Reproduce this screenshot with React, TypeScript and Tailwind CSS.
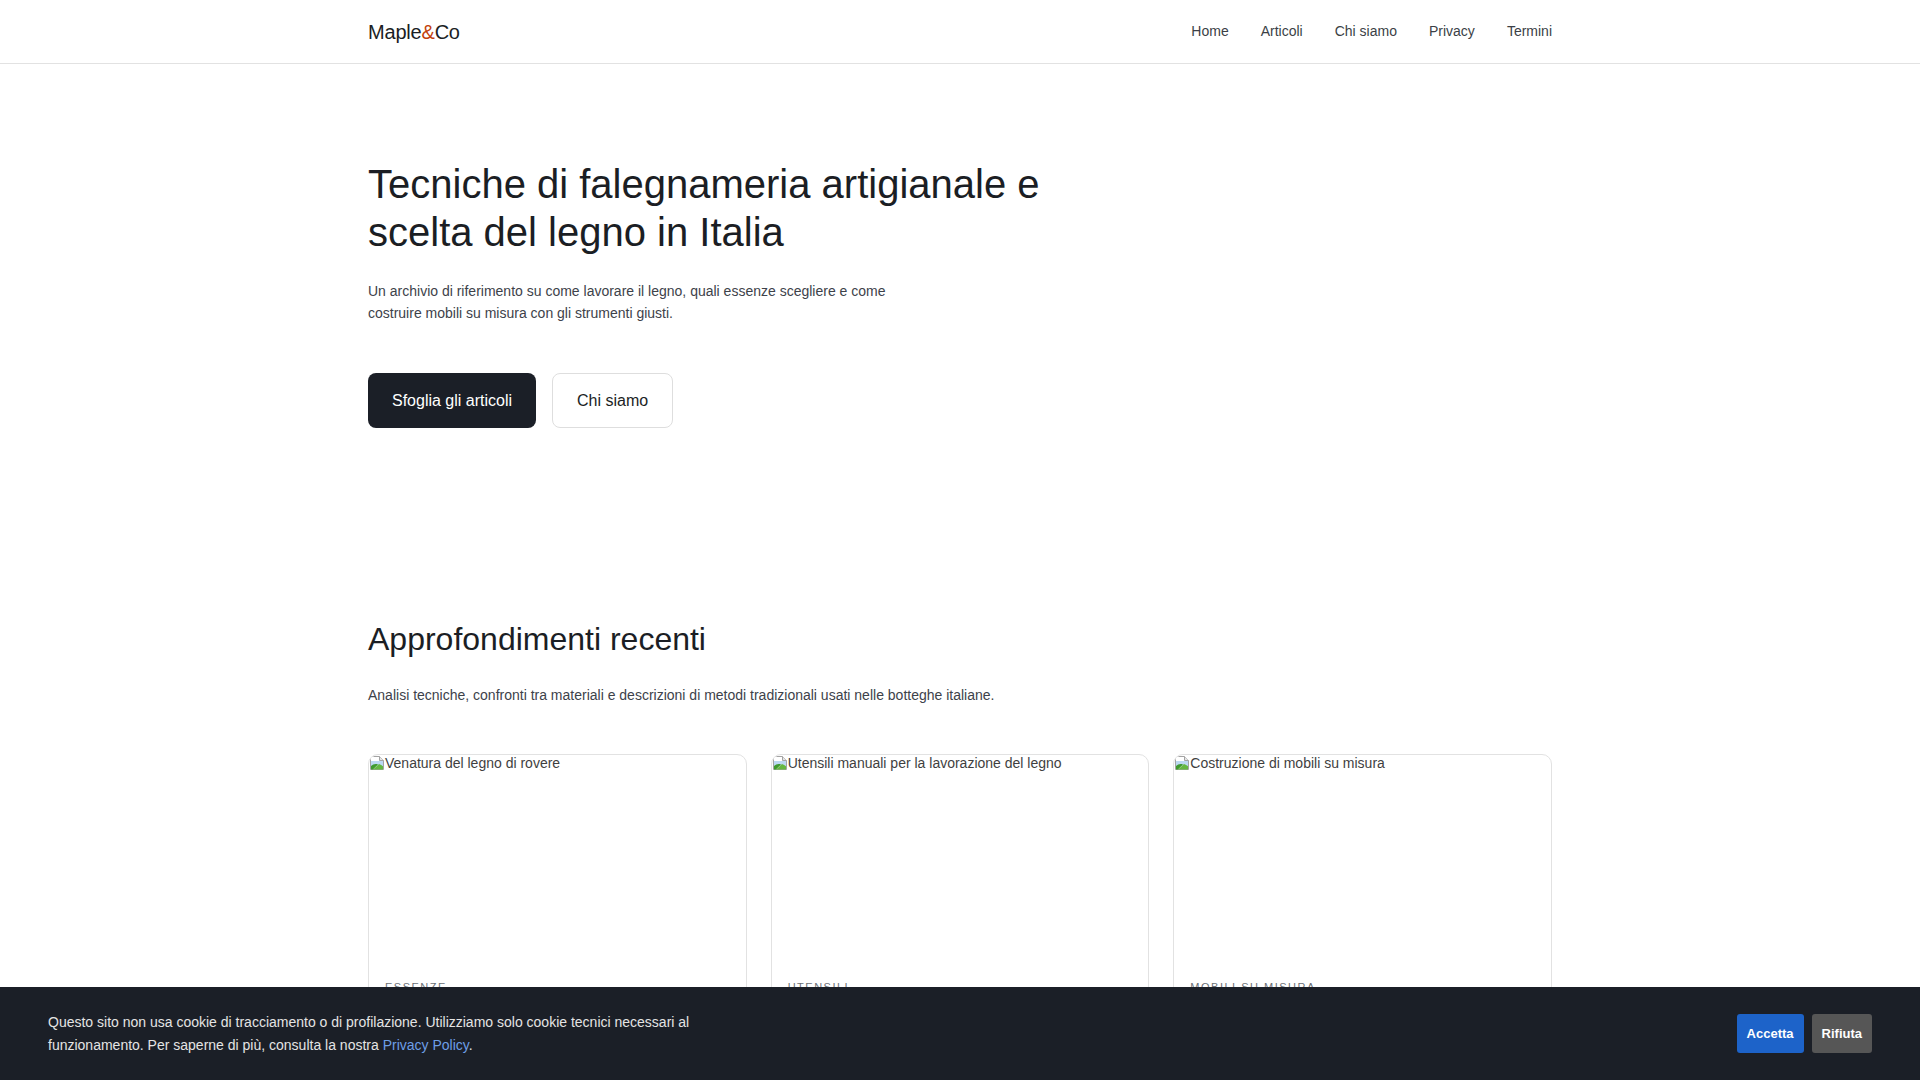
import { ReactNode } from 'react'

const navLinks = ['Home', 'Articoli', 'Chi siamo', 'Privacy', 'Termini']

const articles = [
  {
    alt: 'Venatura del legno di rovere',
    category: 'Essenze',
    title: 'Rovere, noce e castagno: come scegliere il legno giusto',
    excerpt: 'Differenze di venatura, durezza e stagionatura tra le essenze più usate in Italia.',
  },
  {
    alt: 'Utensili manuali per la lavorazione del legno',
    category: 'Utensili',
    title: 'Pialle, scalpelli e seghe giapponesi: gli attrezzi di base',
    excerpt: 'Una guida agli utensili manuali indispensabili e alla loro manutenzione.',
  },
  {
    alt: 'Costruzione di mobili su misura',
    category: 'Mobili su misura',
    title: 'Incastri tradizionali per mobili che durano nel tempo',
    excerpt: 'Tenone e mortasa, coda di rondine e altri giunti senza viti né colla.',
  },
]

// placeholder shown while an article picture is missing
function BrokenImage({ alt }: { alt: string }) {
  return (
    <div className="h-[208px] text-[14px] leading-[16px] text-[#3f3f3f]">
      <svg width="16" height="16" viewBox="0 0 16 16" className="inline-block align-top">
        <path d="M1.5 1.5h9l4 4v9h-13z" fill="#fff" stroke="#a3a3a3" />
        <path d="M10.5 1.5v4h4" fill="#e5e5e5" stroke="#a3a3a3" />
        <rect x="2" y="6" width="12" height="5" fill="#bcd8f2" />
        <path d="M2 14.5v-3.5c2-1.8 4.5-2.6 7-1.5l-5 5z" fill="#3f9a2e" />
        <path d="M4 14.5l6-5.5c1.5.4 2.8 1.2 4 2.3v3.2z" fill="#65b741" />
      </svg>
      {alt}
    </div>
  )
}

function Button({ children, dark }: { children: ReactNode; dark?: boolean }) {
  return (
    <a
      href="#"
      className={
        dark
          ? 'rounded-lg bg-[#1b1f27] px-6 py-4 text-[16px] leading-[23px] text-white'
          : 'rounded-lg border border-[#dedede] bg-white px-6 py-[15px] text-[16px] leading-[23px] text-[#1b1e24]'
      }
    >
      {children}
    </a>
  )
}

export default function App() {
  return (
    <div className="min-h-screen bg-white font-['Liberation_Sans',Arial,sans-serif] text-[#1b1e24]">
      <header className="border-b border-[#e2e2e2]">
        <div className="mx-auto flex h-[63px] max-w-[1184px] items-center justify-between">
          <a href="#" className="text-[20px] tracking-[-0.2px] text-[#1b1e24]">
            Maple<span className="text-[#c2410c]">&amp;</span>Co
          </a>
          <nav className="flex gap-8 text-[14px] text-[#3b3f46]">
            {navLinks.map(link => (
              <a key={link} href="#">
                {link}
              </a>
            ))}
          </nav>
        </div>
      </header>

      <main className="mx-auto max-w-[1184px]">
        {/* Hero */}
        <section className="pt-24 pb-24">
          <h1 className="max-w-3xl text-[40px] leading-[48px] font-normal">
            Tecniche di falegnameria artigianale e scelta del legno in Italia
          </h1>
          <p className="mt-6 max-w-[560px] text-[14px] leading-[22.4px] text-[#3d424a]">
            Un archivio di riferimento su come lavorare il legno, quali essenze scegliere e come
            costruire mobili su misura con gli strumenti giusti.
          </p>
          <div className="mt-12 flex gap-4">
            <Button dark>Sfoglia gli articoli</Button>
            <Button>Chi siamo</Button>
          </div>
        </section>

        {/* Recent articles */}
        <section className="pt-24 pb-24">
          <h2 className="text-[32px] leading-[38px] font-normal">Approfondimenti recenti</h2>
          <p className="mt-[26px] text-[14px] leading-[22.4px] text-[#3d424a]">
            Analisi tecniche, confronti tra materiali e descrizioni di metodi tradizionali usati nelle botteghe italiane.
          </p>
          <div className="mt-12 grid grid-cols-3 gap-6">
            {articles.map(a => (
              <article key={a.alt} className="overflow-hidden rounded-[10px] border border-[#e2e2e2]">
                <BrokenImage alt={a.alt} />
                <div className="p-4">
                  <div className="text-[11px] leading-4 tracking-[1.5px] text-[#6b7076] uppercase">{a.category}</div>
                  <h3 className="mt-2 text-[18px] leading-6">{a.title}</h3>
                  <p className="mt-2 text-[14px] leading-[22.4px] text-[#3d424a]">{a.excerpt}</p>
                </div>
              </article>
            ))}
          </div>
        </section>
      </main>

      {/* Cookie notice */}
      <div className="fixed inset-x-0 bottom-0 flex items-center justify-between bg-[#1b1f27] px-12 py-6">
        <p className="max-w-[672px] text-[14px] leading-[22.4px] text-[#e4e4e4]">
          Questo sito non usa cookie di tracciamento o di profilazione. Utilizziamo solo cookie tecnici necessari al
          funzionamento. Per saperne di più, consulta la nostra{' '}
          <a href="#" className="text-[#6d9ee6]">
            Privacy Policy
          </a>
          .
        </p>
        <div className="flex gap-2">
          <button className="rounded-[3px] bg-[#1d63c9] px-2.5 py-[11px] text-[13px] leading-[17px] font-bold text-white">
            Accetta
          </button>
          <button className="rounded-[3px] bg-[#565656] px-2.5 py-[11px] text-[13px] leading-[17px] font-bold text-white">
            Rifiuta
          </button>
        </div>
      </div>
    </div>
  )
}
